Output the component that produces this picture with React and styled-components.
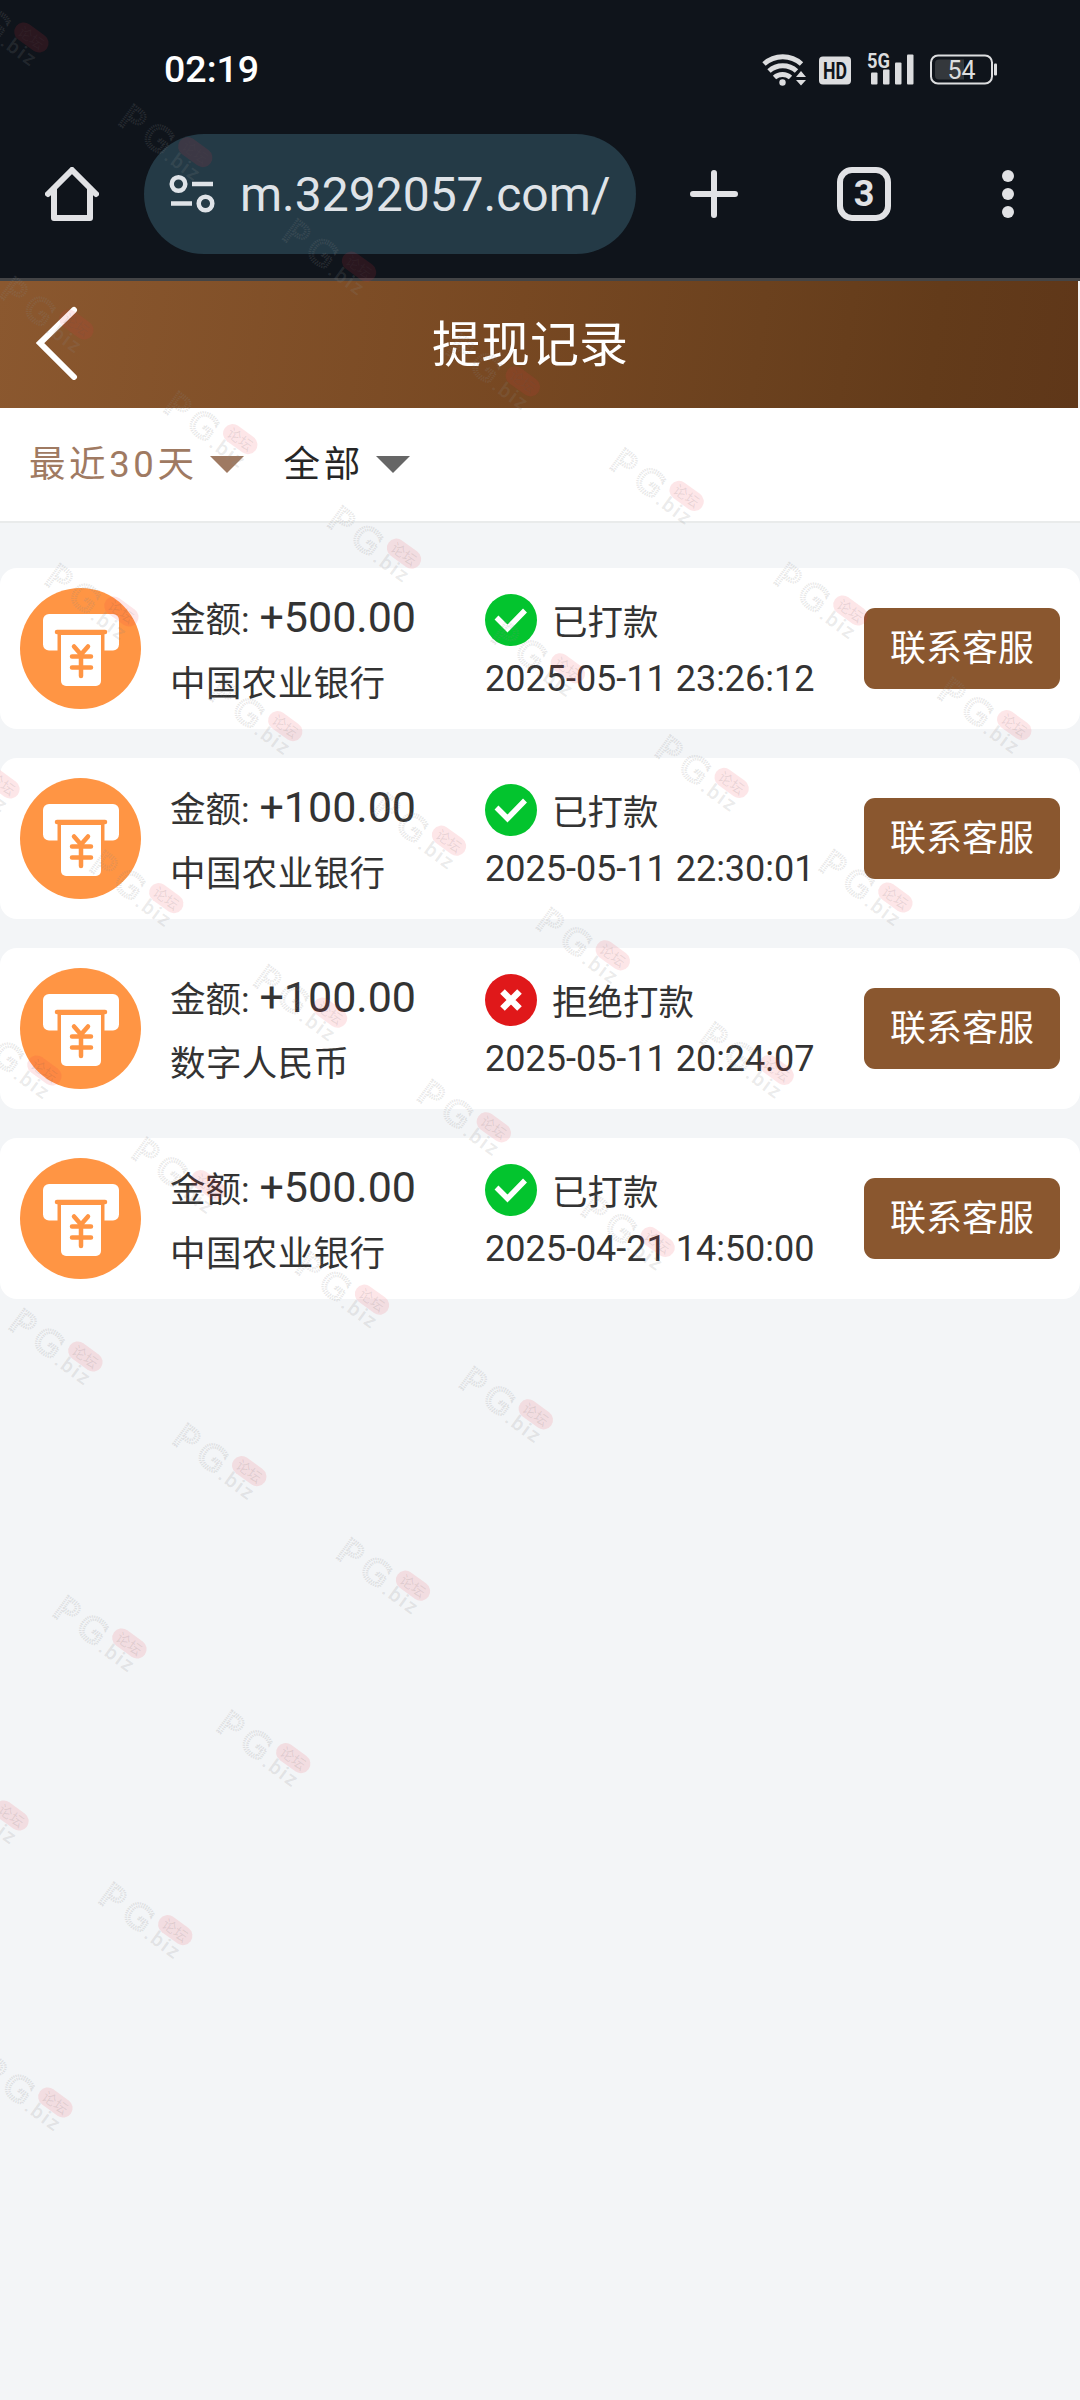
import React from 'react';
import styled, { createGlobalStyle } from 'styled-components';

const records = [
  { id: 1, amount: '+500.00', bank: '中国农业银行', status: 'paid', time: '2025-05-11 23:26:12' },
  { id: 2, amount: '+100.00', bank: '中国农业银行', status: 'paid', time: '2025-05-11 22:30:01' },
  { id: 3, amount: '+100.00', bank: '数字人民币', status: 'rejected', time: '2025-05-11 20:24:07' },
  { id: 4, amount: '+500.00', bank: '中国农业银行', status: 'paid', time: '2025-04-21 14:50:00' },
];

const statusText = { paid: '已打款', rejected: '拒绝打款' };

// start of each diagonal and how many marks it holds
const diagonals = [
  [-28, -10, 7],
  [17, 277, 6],
  [62, 564, 5],
  [-57, 736, 5],
  [-15, 1023, 4],
  [26, 1309, 3],
  [70, 1596, 2],
  [-48, 1768, 2],
  [-4, 2055, 1],
];

const marks = diagonals.flatMap(([x, y, count]) =>
  Array.from({ length: count }, (_, i) => [x + i * 163.8, y + i * 114.6])
);

const GlobalStyle = createGlobalStyle`
  * {
    box-sizing: border-box;
  }

  body {
    margin: 0;
    background: #f3f5f7;
    font-family: Roboto, 'Noto Sans CJK SC', sans-serif;
  }
`;

const Page = styled.div`
  position: relative;
  display: flex;
  flex-direction: column;
  width: 1080px;
  height: 2400px;
  overflow: hidden;
  background: #f3f5f7;
  color: #333;
`;

const Browser = styled.div`
  height: 281px;
  background: #0f141b;
  border-bottom: 3px solid #434446;
`;

const StatusBar = styled.div`
  display: flex;
  align-items: center;
  justify-content: space-between;
  height: 134px;
  padding: 4px 82px 0 164px;
`;

const Clock = styled.span`
  color: #fff;
  font-size: 37.5px;
  font-weight: 500;
  line-height: 44px;
`;

const StatusIcons = styled.div`
  display: flex;
  height: 36px;
`;

const Toolbar = styled.div`
  display: flex;
  align-items: center;
  height: 120px;
  padding-left: 45px;
  color: #e1e2e5;
`;

const AddressBar = styled.div`
  display: flex;
  align-items: center;
  width: 492px;
  height: 120px;
  margin-left: 45px;
  padding-left: 25px;
  border-radius: 60px;
  background: #243a46;
`;

const Url = styled.span`
  margin: 2px 0 0 23px;
  color: #dfe3e8;
  font-size: 48px;
  line-height: 60px;
  white-space: nowrap;
`;

const PlusIcon = styled.svg`
  margin-left: 54px;
`;

const TabCount = styled.div`
  display: flex;
  align-items: center;
  justify-content: center;
  width: 54px;
  height: 54px;
  margin-left: 99px;
  border: 6px solid #e1e2e5;
  border-radius: 15px;
  font-size: 36px;
  font-weight: 700;
  line-height: 42px;
`;

const Dots = styled.div`
  display: flex;
  flex-direction: column;
  gap: 6px;
  margin-left: 111px;

  i {
    width: 12px;
    height: 12px;
    border-radius: 50%;
    background: #e1e2e5;
  }
`;

const Header = styled.header`
  display: flex;
  align-items: center;
  width: 1078px;
  height: 127px;
  background: linear-gradient(98deg, #8b582f 0%, #774822 48%, #6b411e 70%, #633b1a 86%, #5f3719 100%);
`;

const BackIcon = styled.svg`
  margin: 0 0 4px 36px;
`;

const Title = styled.h1`
  flex: 1;
  margin: 0 98px 0 0;
  padding: 2px 0 0 2px;
  color: #fff;
  font-size: 49px;
  font-weight: 400;
  line-height: 64px;
  text-align: center;
`;

const Filters = styled.div`
  display: flex;
  align-items: center;
  height: 115px;
  padding: 0 0 0 29px;
  background: #fff;
  border-bottom: 2px solid #e9ebeb;
`;

const Filter = styled.div`
  display: flex;
  align-items: center;
  margin-right: 40px;
  color: ${({ $active }) => ($active ? '#9f7a62' : '#262626')};
  font-size: 36.5px;
  letter-spacing: 3.6px;
  line-height: 48px;

  &::after {
    content: '';
    margin: 0 0 0 12px;
    border: 17px solid transparent;
    border-top-color: ${({ $active }) => ($active ? '#9f7a62' : '#666')};
    border-bottom: 0;
  }
`;

const List = styled.div`
  display: flex;
  flex-direction: column;
  gap: 29px;
  padding-top: 45px;
`;

const Card = styled.div`
  display: flex;
  align-items: center;
  height: 161px;
  padding: 0 20px;
  border-radius: 17px;
  background: #fff;
`;

const Info = styled.div`
  display: flex;
  flex-direction: column;
  width: 315px;
  margin-left: 29px;
  font-size: 35.5px;
`;

const Amount = styled.div`
  height: 65px;
  line-height: 65px;
  white-space: nowrap;

  b {
    margin-left: 1px;
    font-size: 43px;
    font-weight: 400;
  }
`;

const Bank = styled.div`
  height: 62px;
  letter-spacing: 0.4px;
  line-height: 68px;
`;

const State = styled.div`
  width: 379px;
  font-size: 35.5px;
`;

const StatusLine = styled.div`
  display: flex;
  align-items: center;
  gap: 15px;
  height: 62px;
  padding-top: 2px;
`;

const Time = styled.div`
  height: 60px;
  font-size: 36px;
  line-height: 58px;
  white-space: nowrap;
`;

const ServiceButton = styled.button`
  width: 196px;
  height: 81px;
  padding: 0;
  border: 0;
  border-radius: 11px;
  background: #8a572f;
  color: #fff;
  font-family: inherit;
  font-size: 36px;
  line-height: 80px;
`;

const Overlay = styled.svg`
  position: absolute;
  inset: 0;
  pointer-events: none;
`;

const SignalIcons = () => (
  <StatusIcons>
    <svg width="236" height="36" viewBox="762 50.5 236 36" fill="#dcdddf">
      <g fill="none" stroke="#dcdddf" strokeWidth="5">
        <path d="M764 63.5a28 28 0 0 1 37.5 0" />
        <path d="M769 70.5a20.5 20.5 0 0 1 27.5 0" />
        <path d="M774.5 77a12 12 0 0 1 16 0" />
      </g>
      <circle cx="782.5" cy="82" r="3.2" />
      <path d="M796 76.5l5-6 5 6zM796 79.5h10l-5 5.5z" />
      <rect x="819" y="56" width="32" height="28" rx="4" />
      <text x="835" y="78.5" fill="#0f141b" fontSize="23" fontWeight="700" textAnchor="middle" textLength="24" lengthAdjust="spacingAndGlyphs">HD</text>
      <text x="867" y="67.5" fontSize="21" fontWeight="700" textLength="23" lengthAdjust="spacingAndGlyphs">5G</text>
      <rect x="871" y="72" width="6.5" height="12" rx="1" />
      <rect x="883" y="69" width="6.5" height="15" rx="1" />
      <rect x="895" y="62" width="6.5" height="22" rx="1" />
      <rect x="907" y="54" width="6.5" height="30" rx="1" />
      <rect x="931" y="55" width="61" height="28" rx="7" fill="none" stroke="#dcdddf" strokeWidth="2" />
      <path d="M939 59h25v20h-25a4 4 0 0 1-4-4v-12a4 4 0 0 1 4-4z" fill="#34383c" />
      <rect x="994" y="63" width="3" height="12" rx="1" />
      <text x="961.5" y="78.5" fontSize="25" textAnchor="middle">54</text>
    </svg>
  </StatusIcons>
);

const HomeIcon = () => (
  <svg width="54" height="54" viewBox="0 0 54 54" fill="none" stroke="#e1e2e5" strokeWidth="6" strokeLinecap="round" strokeLinejoin="round">
    <path d="M3 27L27 3l24 24" />
    <path d="M9 22v29h36V22" />
  </svg>
);

const TuneIcon = () => (
  <svg width="48" height="40" viewBox="0 0 48 40" fill="none" stroke="#dfe3e8" strokeWidth="4.5">
    <circle cx="9.5" cy="10" r="6.8" />
    <path d="M23 10h21M2 29.5h21" />
    <circle cx="36.5" cy="29.5" r="6.8" />
  </svg>
);

const WithdrawIcon = () => (
  <svg width="121" height="121" viewBox="0 0 121 121">
    <circle cx="60.5" cy="60.5" r="60.5" fill="#ff9544" />
    <rect x="23" y="26" width="76" height="36.5" rx="6" fill="#fff" />
    <path d="M37 44h48" stroke="#ff9544" strokeWidth="4.5" strokeLinecap="round" />
    <path d="M37.5 44h47v20h-47z" fill="#ff9544" />
    <path d="M41 47h40v46a5 5 0 0 1-5 5h-30a5 5 0 0 1-5-5z" fill="#fff" />
    <path d="M54 58.5l7 8 7-8M61 67v21M52 68.500h19M52 79.5h19" fill="none" stroke="#ff9544" strokeWidth="4.5" strokeLinecap="round" strokeLinejoin="round" />
  </svg>
);

const StatusIcon = ({ status }) => (
  <svg width="52" height="52" viewBox="0 0 52 52" fill="none">
    <circle cx="26" cy="26" r="26" fill={status === 'paid' ? '#03c42e' : '#e0181a'} />
    {status === 'paid' ? (
      <path d="M11.5 23.5L22.5 34.5 40 16.5" stroke="#fff" strokeWidth="5.5" />
    ) : (
      <path d="M17.5 17.5l17 17M34.5 17.5l-17 17" stroke="#fff" strokeWidth="6.5" />
    )}
  </svg>
);

const Watermarks = () => (
  <Overlay width="1080" height="2400">
    {marks.map(([x, y]) => (
      <g key={`${x}-${y}`} transform={`translate(${x} ${y}) rotate(36)`}>
        <text x="-5" y="26" fontSize="34" fontFamily="DejaVu Sans" letterSpacing="6" textLength="64" lengthAdjust="spacingAndGlyphs" fill="none" stroke="#888" strokeOpacity="0.2" strokeWidth="2.4" strokeDasharray="1.2 1">PG</text>
        <rect x="57" y="-6" width="38" height="19" rx="9.5" fill="#f03040" fillOpacity="0.12" />
        <text x="62" y="9" fontSize="14" fill="#555" fillOpacity="0.13">论坛</text>
        <text x="54" y="28" fontSize="20" fontWeight="500" letterSpacing="2" fill="#888" fillOpacity="0.18">.biz</text>
      </g>
    ))}
  </Overlay>
);

const RecordCard = ({ record }) => (
  <Card>
    <WithdrawIcon />
    <Info>
      <Amount>金额: <b>{record.amount}</b></Amount>
      <Bank>{record.bank}</Bank>
    </Info>
    <State>
      <StatusLine>
        <StatusIcon status={record.status} />
        <span>{statusText[record.status]}</span>
      </StatusLine>
      <Time>{record.time}</Time>
    </State>
    <ServiceButton>联系客服</ServiceButton>
  </Card>
);

const App = () => {
  return (
    <>
      <GlobalStyle />
      <Page>
        <Browser>
          <StatusBar>
            <Clock>02:19</Clock>
            <SignalIcons />
          </StatusBar>
          <Toolbar>
            <HomeIcon />
            <AddressBar>
              <TuneIcon />
              <Url>m.3292057.com/</Url>
            </AddressBar>
            <PlusIcon width="48" height="48" viewBox="0 0 48 48" stroke="#e1e2e5" strokeWidth="6" strokeLinecap="round">
              <path d="M24 3v42M3 24h42" />
            </PlusIcon>
            <TabCount>3</TabCount>
            <Dots>
              <i />
              <i />
              <i />
            </Dots>
          </Toolbar>
        </Browser>
        <Header>
          <BackIcon width="42" height="74" viewBox="0 0 42 74" fill="none" stroke="#fff" strokeWidth="6" strokeLinecap="round">
            <path d="M38 4L4 37l34 34" />
          </BackIcon>
          <Title>提现记录</Title>
        </Header>
        <Filters>
          <Filter $active>最近30天</Filter>
          <Filter>全部</Filter>
        </Filters>
        <List>
          {records.map((record) => (
            <RecordCard key={record.id} record={record} />
          ))}
        </List>
        <Watermarks />
      </Page>
    </>
  );
};

export default App;
